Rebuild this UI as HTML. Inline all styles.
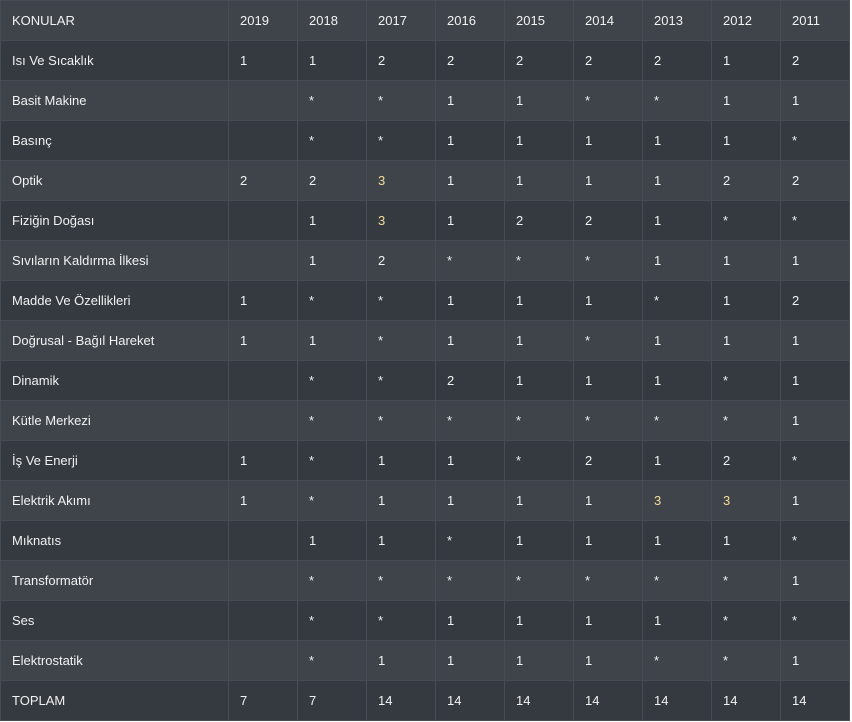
<!DOCTYPE html>
<html><head><meta charset="utf-8"><style>
html,body{margin:0;padding:0;background:#fff;}
table{border-collapse:collapse;width:850px;table-layout:fixed;font-family:"Liberation Sans","DejaVu Sans",sans-serif;font-size:13px;color:#f2f2f2;}
td{border:1px solid #454d55;height:40px;padding:0 0 0 11px;box-sizing:border-box;vertical-align:middle;white-space:nowrap;}
tr:nth-child(odd){background:#3e444a;}
tr:nth-child(even){background:#343a40;}
.y{color:#f3dc9a;}
</style></head><body>
<table>
<colgroup><col style="width:228px"><col style="width:69px"><col style="width:69px"><col style="width:69px"><col style="width:69px"><col style="width:69px"><col style="width:69px"><col style="width:69px"><col style="width:69px"><col></colgroup>
<tr><td>KONULAR</td><td>2019</td><td>2018</td><td>2017</td><td>2016</td><td>2015</td><td>2014</td><td>2013</td><td>2012</td><td>2011</td></tr>
<tr><td>Isı Ve Sıcaklık</td><td>1</td><td>1</td><td>2</td><td>2</td><td>2</td><td>2</td><td>2</td><td>1</td><td>2</td></tr>
<tr><td>Basit Makine</td><td></td><td>*</td><td>*</td><td>1</td><td>1</td><td>*</td><td>*</td><td>1</td><td>1</td></tr>
<tr><td>Basınç</td><td></td><td>*</td><td>*</td><td>1</td><td>1</td><td>1</td><td>1</td><td>1</td><td>*</td></tr>
<tr><td>Optik</td><td>2</td><td>2</td><td class="y">3</td><td>1</td><td>1</td><td>1</td><td>1</td><td>2</td><td>2</td></tr>
<tr><td>Fiziğin Doğası</td><td></td><td>1</td><td class="y">3</td><td>1</td><td>2</td><td>2</td><td>1</td><td>*</td><td>*</td></tr>
<tr><td>Sıvıların Kaldırma İlkesi</td><td></td><td>1</td><td>2</td><td>*</td><td>*</td><td>*</td><td>1</td><td>1</td><td>1</td></tr>
<tr><td>Madde Ve Özellikleri</td><td>1</td><td>*</td><td>*</td><td>1</td><td>1</td><td>1</td><td>*</td><td>1</td><td>2</td></tr>
<tr><td>Doğrusal - Bağıl Hareket</td><td>1</td><td>1</td><td>*</td><td>1</td><td>1</td><td>*</td><td>1</td><td>1</td><td>1</td></tr>
<tr><td>Dinamik</td><td></td><td>*</td><td>*</td><td>2</td><td>1</td><td>1</td><td>1</td><td>*</td><td>1</td></tr>
<tr><td>Kütle Merkezi</td><td></td><td>*</td><td>*</td><td>*</td><td>*</td><td>*</td><td>*</td><td>*</td><td>1</td></tr>
<tr><td>İş Ve Enerji</td><td>1</td><td>*</td><td>1</td><td>1</td><td>*</td><td>2</td><td>1</td><td>2</td><td>*</td></tr>
<tr><td>Elektrik Akımı</td><td>1</td><td>*</td><td>1</td><td>1</td><td>1</td><td>1</td><td class="y">3</td><td class="y">3</td><td>1</td></tr>
<tr><td>Mıknatıs</td><td></td><td>1</td><td>1</td><td>*</td><td>1</td><td>1</td><td>1</td><td>1</td><td>*</td></tr>
<tr><td>Transformatör</td><td></td><td>*</td><td>*</td><td>*</td><td>*</td><td>*</td><td>*</td><td>*</td><td>1</td></tr>
<tr><td>Ses</td><td></td><td>*</td><td>*</td><td>1</td><td>1</td><td>1</td><td>1</td><td>*</td><td>*</td></tr>
<tr><td>Elektrostatik</td><td></td><td>*</td><td>1</td><td>1</td><td>1</td><td>1</td><td>*</td><td>*</td><td>1</td></tr>
<tr><td>TOPLAM</td><td>7</td><td>7</td><td>14</td><td>14</td><td>14</td><td>14</td><td>14</td><td>14</td><td>14</td></tr>
</table>
</body></html>
